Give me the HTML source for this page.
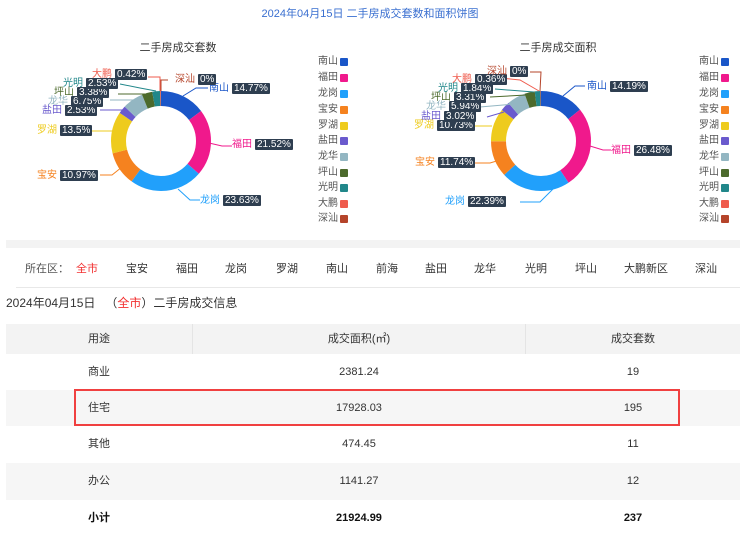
<!DOCTYPE html>
<html><head><meta charset="utf-8"><style>
*{margin:0;padding:0;box-sizing:border-box}
body{width:740px;height:531px;overflow:hidden;background:#fff;font-family:"Liberation Sans","Noto Sans CJK SC",sans-serif;position:relative;color:#333}
.a{position:absolute;white-space:nowrap}
.t{font-size:11px;line-height:12px}
.lb{position:absolute;font-size:10px;line-height:11px;white-space:nowrap}
.bx{background:#2e3e50;color:#fff;padding:0 2px;border-radius:1px;margin-left:3px}
.lg{position:absolute;font-size:10px;color:#555;line-height:12px}
.lg i{position:absolute;width:8px;height:8px;border-radius:1px;top:2px}
.row{position:absolute;left:6px;width:734px;font-size:11px;color:#333}
.row span{position:absolute;top:0;text-align:center}
</style></head><body>
<div class="a t" style="left:0;width:740px;text-align:center;top:8px;color:#3a6fd0;font-size:11px">2024年04月15日 二手房成交套数和面积饼图</div>
<div class="a t" style="left:128px;width:100px;text-align:center;top:42px;color:#333">二手房成交套数</div>
<div class="a t" style="left:508px;width:100px;text-align:center;top:42px;color:#333">二手房成交面积</div>

<svg class="a" style="left:0;top:0" width="740" height="240">
<g transform="translate(161,141) rotate(-90)" fill="none" stroke-width="15">
<circle r="42.5" stroke="#1a56c8" stroke-dasharray="39.4 300" stroke-dashoffset="0"/>
<circle r="42.5" stroke="#f0198c" stroke-dasharray="57.5 300" stroke-dashoffset="-39.4"/>
<circle r="42.5" stroke="#21a0fb" stroke-dasharray="63.1 300" stroke-dashoffset="-96.9"/>
<circle r="42.5" stroke="#f5821f" stroke-dasharray="29.3 300" stroke-dashoffset="-160"/>
<circle r="42.5" stroke="#eecb1d" stroke-dasharray="36.0 300" stroke-dashoffset="-189.3"/>
<circle r="42.5" stroke="#6a5acd" stroke-dasharray="6.8 300" stroke-dashoffset="-225.3"/>
<circle r="42.5" stroke="#93b6c2" stroke-dasharray="18.0 300" stroke-dashoffset="-232.1"/>
<circle r="42.5" stroke="#4c6a2c" stroke-dasharray="9.0 300" stroke-dashoffset="-250.1"/>
<circle r="42.5" stroke="#21878a" stroke-dasharray="6.8 300" stroke-dashoffset="-259.1"/>
<circle r="42.5" stroke="#ef5b4d" stroke-dasharray="1.1 300" stroke-dashoffset="-265.9"/>
</g>
<g transform="translate(541,141) rotate(-90)" fill="none" stroke-width="15">
<circle r="42.5" stroke="#1a56c8" stroke-dasharray="37.9 300" stroke-dashoffset="0"/>
<circle r="42.5" stroke="#f0198c" stroke-dasharray="70.7 300" stroke-dashoffset="-37.9"/>
<circle r="42.5" stroke="#21a0fb" stroke-dasharray="59.8 300" stroke-dashoffset="-108.6"/>
<circle r="42.5" stroke="#f5821f" stroke-dasharray="31.3 300" stroke-dashoffset="-168.4"/>
<circle r="42.5" stroke="#eecb1d" stroke-dasharray="28.7 300" stroke-dashoffset="-199.7"/>
<circle r="42.5" stroke="#6a5acd" stroke-dasharray="8.1 300" stroke-dashoffset="-228.4"/>
<circle r="42.5" stroke="#93b6c2" stroke-dasharray="15.9 300" stroke-dashoffset="-236.5"/>
<circle r="42.5" stroke="#4c6a2c" stroke-dasharray="8.8 300" stroke-dashoffset="-252.4"/>
<circle r="42.5" stroke="#21878a" stroke-dasharray="4.9 300" stroke-dashoffset="-261.2"/>
<circle r="42.5" stroke="#ef5b4d" stroke-dasharray="1.0 300" stroke-dashoffset="-266.1"/>
</g>
<g fill="none" stroke-width="1">
<polyline points="183,96 196,88 208,88" stroke="#1a56c8"/>
<polyline points="209,143 222,146 232,146" stroke="#f0198c"/>
<polyline points="178,189 190,200 200,200" stroke="#21a0fb"/>
<polyline points="122,167 112,175 100,175" stroke="#f5821f"/>
<polyline points="114,131 102,131 92,131" stroke="#eecb1d"/>
<polyline points="125,110 112,110 100,110" stroke="#6a5acd"/>
<polyline points="135,100 110,100" stroke="#93b6c2"/>
<polyline points="145,94 118,94" stroke="#4c6a2c"/>
<polyline points="156,91 140,88 120,84" stroke="#21878a"/>
<polyline points="160,91 160,77 148,77" stroke="#ef5b4d"/>
<polyline points="161,91 161,80 168,80" stroke="#b5442a"/>
<polyline points="563,96 575,86 585,86" stroke="#1a56c8"/>
<polyline points="590,146 603,150 611,150" stroke="#f0198c"/>
<polyline points="553,189 540,202 520,202" stroke="#21a0fb"/>
<polyline points="500,160 490,163 475,163" stroke="#f5821f"/>
<polyline points="492,126 475,126" stroke="#eecb1d"/>
<polyline points="504,112 487,117" stroke="#6a5acd"/>
<polyline points="514,104 480,107" stroke="#93b6c2"/>
<polyline points="526,95 490,97" stroke="#4c6a2c"/>
<polyline points="534,92 495,89" stroke="#21878a"/>
<polyline points="539,91 520,80 500,78" stroke="#ef5b4d"/>
<polyline points="540,91 541,72 530,72" stroke="#b5442a"/>
</g>
</svg>

<!-- left labels -->
<div class="lb" style="left:209px;top:83px;color:#1a56c8">南山<span class="bx">14.77%</span></div>
<div class="lb" style="left:232px;top:139px;color:#f0198c">福田<span class="bx">21.52%</span></div>
<div class="lb" style="left:200px;top:195px;color:#21a0fb">龙岗<span class="bx">23.63%</span></div>
<div class="lb" style="left:37px;top:170px;color:#f5821f">宝安<span class="bx">10.97%</span></div>
<div class="lb" style="left:37px;top:125px;color:#eecb1d">罗湖<span class="bx">13.5%</span></div>
<div class="lb" style="left:42px;top:105px;color:#6a5acd">盐田<span class="bx">2.53%</span></div>
<div class="lb" style="left:48px;top:96px;color:#93b6c2">龙华<span class="bx">6.75%</span></div>
<div class="lb" style="left:54px;top:87px;color:#4c6a2c">坪山<span class="bx">3.38%</span></div>
<div class="lb" style="left:63px;top:78px;color:#21878a">光明<span class="bx">2.53%</span></div>
<div class="lb" style="left:92px;top:69px;color:#ef5b4d">大鹏<span class="bx">0.42%</span></div>
<div class="lb" style="left:175px;top:74px;color:#b5442a">深汕<span class="bx">0%</span></div>
<!-- right labels -->
<div class="lb" style="left:587px;top:81px;color:#1a56c8">南山<span class="bx">14.19%</span></div>
<div class="lb" style="left:611px;top:145px;color:#f0198c">福田<span class="bx">26.48%</span></div>
<div class="lb" style="left:445px;top:196px;color:#21a0fb">龙岗<span class="bx">22.39%</span></div>
<div class="lb" style="left:415px;top:157px;color:#f5821f">宝安<span class="bx">11.74%</span></div>
<div class="lb" style="left:414px;top:120px;color:#eecb1d">罗湖<span class="bx">10.73%</span></div>
<div class="lb" style="left:421px;top:111px;color:#6a5acd">盐田<span class="bx">3.02%</span></div>
<div class="lb" style="left:426px;top:101px;color:#93b6c2">龙华<span class="bx">5.94%</span></div>
<div class="lb" style="left:431px;top:92px;color:#4c6a2c">坪山<span class="bx">3.31%</span></div>
<div class="lb" style="left:438px;top:83px;color:#21878a">光明<span class="bx">1.84%</span></div>
<div class="lb" style="left:452px;top:74px;color:#ef5b4d">大鹏<span class="bx">0.36%</span></div>
<div class="lb" style="left:487px;top:66px;color:#b5442a">深汕<span class="bx">0%</span></div>

<!-- legends -->
<div class="lg" style="left:318px;top:56px">南山<i style="left:22px;background:#1a56c8"></i></div>
<div class="lg" style="left:318px;top:72px">福田<i style="left:22px;background:#f0198c"></i></div>
<div class="lg" style="left:318px;top:88px">龙岗<i style="left:22px;background:#21a0fb"></i></div>
<div class="lg" style="left:318px;top:104px">宝安<i style="left:22px;background:#f5821f"></i></div>
<div class="lg" style="left:318px;top:120px">罗湖<i style="left:22px;background:#eecb1d"></i></div>
<div class="lg" style="left:318px;top:135px">盐田<i style="left:22px;background:#6a5acd"></i></div>
<div class="lg" style="left:318px;top:151px">龙华<i style="left:22px;background:#93b6c2"></i></div>
<div class="lg" style="left:318px;top:167px">坪山<i style="left:22px;background:#4c6a2c"></i></div>
<div class="lg" style="left:318px;top:182px">光明<i style="left:22px;background:#21878a"></i></div>
<div class="lg" style="left:318px;top:198px">大鹏<i style="left:22px;background:#ef5b4d"></i></div>
<div class="lg" style="left:318px;top:213px">深汕<i style="left:22px;background:#b5442a"></i></div>
<div class="lg" style="left:699px;top:56px">南山<i style="left:22px;background:#1a56c8"></i></div>
<div class="lg" style="left:699px;top:72px">福田<i style="left:22px;background:#f0198c"></i></div>
<div class="lg" style="left:699px;top:88px">龙岗<i style="left:22px;background:#21a0fb"></i></div>
<div class="lg" style="left:699px;top:104px">宝安<i style="left:22px;background:#f5821f"></i></div>
<div class="lg" style="left:699px;top:120px">罗湖<i style="left:22px;background:#eecb1d"></i></div>
<div class="lg" style="left:699px;top:135px">盐田<i style="left:22px;background:#6a5acd"></i></div>
<div class="lg" style="left:699px;top:151px">龙华<i style="left:22px;background:#93b6c2"></i></div>
<div class="lg" style="left:699px;top:167px">坪山<i style="left:22px;background:#4c6a2c"></i></div>
<div class="lg" style="left:699px;top:182px">光明<i style="left:22px;background:#21878a"></i></div>
<div class="lg" style="left:699px;top:198px">大鹏<i style="left:22px;background:#ef5b4d"></i></div>
<div class="lg" style="left:699px;top:213px">深汕<i style="left:22px;background:#b5442a"></i></div>

<div class="a" style="left:6px;top:240px;width:734px;height:8px;background:#f3f3f3"></div>
<div class="a" style="left:16px;top:287px;width:724px;height:1px;background:#e8e8e8"></div>
<div class="a t" style="top:263px;left:25px;font-size:11px;color:#555">所在区：</div>
<div class="a t" style="top:263px;left:76px;color:#f23030">全市</div>
<div class="a t" style="top:263px;left:126px">宝安</div>
<div class="a t" style="top:263px;left:176px">福田</div>
<div class="a t" style="top:263px;left:225px">龙岗</div>
<div class="a t" style="top:263px;left:276px">罗湖</div>
<div class="a t" style="top:263px;left:326px">南山</div>
<div class="a t" style="top:263px;left:376px">前海</div>
<div class="a t" style="top:263px;left:425px">盐田</div>
<div class="a t" style="top:263px;left:474px">龙华</div>
<div class="a t" style="top:263px;left:525px">光明</div>
<div class="a t" style="top:263px;left:575px">坪山</div>
<div class="a t" style="top:263px;left:624px">大鹏新区</div>
<div class="a t" style="top:263px;left:695px">深汕</div>

<div class="a" style="top:296px;left:6px;font-size:12px;line-height:14px;color:#333">2024年04月15日 &nbsp;&nbsp;（<span style="color:#f23030">全市</span>）二手房成交信息</div>

<div class="row" style="top:324px;height:30px;background:#f3f3f3;line-height:30px">
<span style="left:0;width:186px">用途</span><span style="left:186px;width:334px;border-left:1px solid #e4e4e4;border-right:1px solid #e4e4e4;height:30px">成交面积(㎡)</span><span style="left:520px;width:214px">成交套数</span></div>
<div class="row" style="top:354px;height:36px;line-height:36px"><span style="left:0;width:186px">商业</span><span style="left:186px;width:334px">2381.24</span><span style="left:520px;width:214px">19</span></div>
<div class="row" style="top:390px;height:36px;line-height:36px;background:#f6f6f6"><span style="left:0;width:186px">住宅</span><span style="left:186px;width:334px">17928.03</span><span style="left:520px;width:214px">195</span></div>
<div class="row" style="top:426px;height:37px;line-height:37px"><span style="left:0;width:186px">其他</span><span style="left:186px;width:334px">474.45</span><span style="left:520px;width:214px">11</span></div>
<div class="row" style="top:463px;height:37px;line-height:37px;background:#f6f6f6"><span style="left:0;width:186px">办公</span><span style="left:186px;width:334px">1141.27</span><span style="left:520px;width:214px">12</span></div>
<div class="row" style="top:500px;height:37px;line-height:37px;font-weight:bold;color:#111"><span style="left:0;width:186px">小计</span><span style="left:186px;width:334px">21924.99</span><span style="left:520px;width:214px">237</span></div>
<div class="a" style="left:74px;top:389px;width:606px;height:37px;border:2px solid #f04040"></div>
</body></html>
